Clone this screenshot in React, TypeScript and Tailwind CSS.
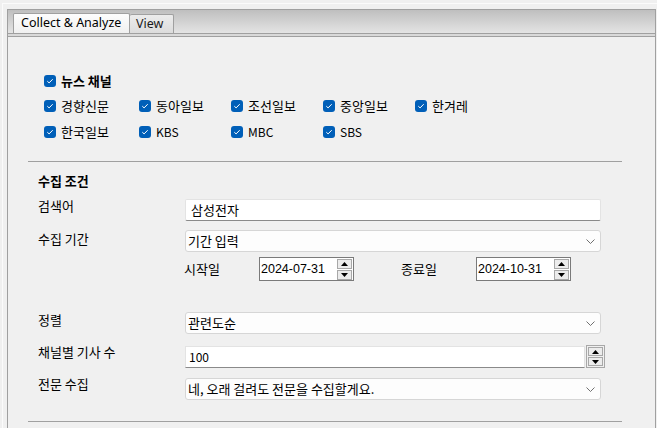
import type { ReactNode } from 'react';

const channelRows = [
  ['경향신문', '동아일보', '조선일보', '중앙일보', '한겨레'],
  ['한국일보', 'KBS', 'MBC', 'SBS'],
];

// latin-only names read a bit narrower than the hangul ones
const isLatin = (s: string) => /^[A-Za-z0-9 ]+$/.test(s);

function CheckMark() {
  return (
    <span className="flex h-[12px] w-[12px] shrink-0 items-center justify-center rounded-[3px] bg-[#005fb8]">
      <svg width="8" height="8" viewBox="0 0 8 8">
        <path d="M1.3 4.2 L3.1 5.9 L6.7 2.2" stroke="#ffffff" strokeWidth="1" fill="none" />
      </svg>
    </span>
  );
}

function Check({ label, bold }: { label: string; bold?: boolean }) {
  return (
    <div className="flex items-center gap-[5px]">
      <CheckMark />
      <span className={`${bold ? 'font-bold' : ''} ${isLatin(label) ? 'text-[12px]' : ''}`}>{label}</span>
    </div>
  );
}

function Chevron() {
  return (
    <svg width="9" height="5" viewBox="0 0 9 5" className="shrink-0">
      <path d="M0.5 0.5 L4.5 4.5 L8.5 0.5" stroke="#606060" strokeWidth="0.9" fill="none" />
    </svg>
  );
}

function Combo({ value }: { value: string }) {
  return (
    <div className="flex h-[22px] w-[416px] items-center justify-between rounded-[3px] border border-[#d6d6d6] bg-[#fdfdfd] pl-[2px] pr-[5px]">
      <span>{value}</span>
      <Chevron />
    </div>
  );
}

function Arrow({ up }: { up?: boolean }) {
  return (
    <svg width="7" height="4" viewBox="0 0 7 4">
      <path d={up ? 'M0 4 L3.5 0 L7 4 Z' : 'M0 0 L7 0 L3.5 4 Z'} fill="#000000" />
    </svg>
  );
}

function SpinButtons({ h }: { h: string }) {
  return (
    <div className="flex flex-col gap-[1px]">
      <div className={`flex w-[15px] items-center justify-center border border-[#a8a8a8] bg-[#ececec] ${h}`}>
        <Arrow up />
      </div>
      <div className={`flex w-[15px] items-center justify-center border border-[#a8a8a8] bg-[#ececec] ${h}`}>
        <Arrow />
      </div>
    </div>
  );
}

function DateBox({ value }: { value: string }) {
  return (
    <div className="flex h-[24px] w-[95px] items-center justify-between border border-[#7a7a7a] bg-white pl-[1px] pr-[1px] font-['Liberation_Sans',sans-serif] text-[12.5px]">
      <span>{value}</span>
      <SpinButtons h="h-[10px]" />
    </div>
  );
}

function Row({ label, top, children, labelOffset = 0 }: { label: string; top: string; children: ReactNode; labelOffset?: number }) {
  return (
    <div className={`flex ${top}`}>
      <div className="w-[147px] leading-[16px]" style={{ marginTop: labelOffset }}>
        {label}
      </div>
      {children}
    </div>
  );
}

export default function App() {
  return (
    <div className="h-[428px] w-[657px] overflow-hidden bg-[#f0f0f0] font-['Noto_Sans_CJK_KR','Noto_Sans',sans-serif] text-[13px] text-black">
      <div className="h-full pl-[2px] pt-[3px]">
        <div className="flex h-full flex-col border-l border-t border-[#fbfbfb] pl-[4px] pr-[1px] pt-[5px]">
          {/* tab strip */}
          <div className="flex h-[24px] items-end border-x border-t border-[#a0a0a0] bg-gradient-to-b from-[#bfbfbf] to-[#e4e4e4] pl-[5px] font-['Noto_Sans',sans-serif]">
            <div className="flex h-[20px] w-[117px] items-center rounded-t-[2px] border-x border-t border-[#a0a0a0] bg-gradient-to-b from-[#fdfdfd] to-[#f0f0f0] pl-[7px] text-[12.5px] leading-none">
              Collect &amp; Analyze
            </div>
            <div className="flex h-[19px] w-[44px] items-center rounded-t-[2px] border-r border-t border-[#a0a0a0] bg-gradient-to-b from-[#ececec] to-[#dcdcdc] pl-[6px] text-[12.5px] leading-none text-[#1a1a1a]">
              View
            </div>
          </div>
          <div className="h-[4px] border border-[#a0a0a0] bg-[#d9d9d9]" />

          {/* page body */}
          <div className="flex-1 border-x border-[#a0a0a0] pl-[20px] pr-[33px] pt-[31px]">
            <div className="pl-[16px]">
              <div className="flex h-[25px] items-center">
                <Check label="뉴스 채널" bold />
              </div>
              {channelRows.map((row, i) => (
                <div key={i} className="grid h-[26px] grid-cols-[95px_92px_92px_92px_92px] items-center">
                  {row.map((name) => (
                    <Check key={name} label={name} />
                  ))}
                </div>
              ))}
            </div>

            <div className="mt-[16px] h-px bg-[#a0a0a0]" />

            <div className="pl-[10px]">
              <div className="mt-[9px] flex h-[20px] items-center font-bold">수집 조건</div>

              <Row label="검색어" top="mt-[8px]" labelOffset={-1}>
                <div className="flex h-[22px] w-[416px] items-center rounded-[2px] border border-[#e3e3e3] border-b-[#8a8a8a] bg-white pl-[5px]">
                  삼성전자
                </div>
              </Row>

              <Row label="수집 기간" top="mt-[9px]" labelOffset={1}>
                <Combo value="기간 입력" />
              </Row>

              <div className="mt-[5px] flex h-[24px] items-center pl-[146px]">
                <span className="w-[75px]">시작일</span>
                <DateBox value="2024-07-31" />
                <span className="ml-[47px] w-[75px]">종료일</span>
                <DateBox value="2024-10-31" />
              </div>

              <Row label="정렬" top="mt-[31px]" labelOffset={0}>
                <Combo value="관련도순" />
              </Row>

              <Row label="채널별 기사 수" top="mt-[11px]" labelOffset={-1}>
                <div className="flex items-center">
                  <div className="flex h-[22px] w-[400px] items-center border border-[#e3e3e3] border-b-[#8a8a8a] bg-white pl-[3px] text-[12px]">
                    100
                  </div>
                  <div className="ml-[1px] border border-[#a8a8a8] p-[1px]">
                    <SpinButtons h="h-[9px]" />
                  </div>
                </div>
              </Row>

              <Row label="전문 수집" top="mt-[10px]" labelOffset={-2}>
                <Combo value="네, 오래 걸려도 전문을 수집할게요." />
              </Row>
            </div>

            <div className="mt-[21px] h-px bg-[#a0a0a0]" />
          </div>
        </div>
      </div>
    </div>
  );
}
